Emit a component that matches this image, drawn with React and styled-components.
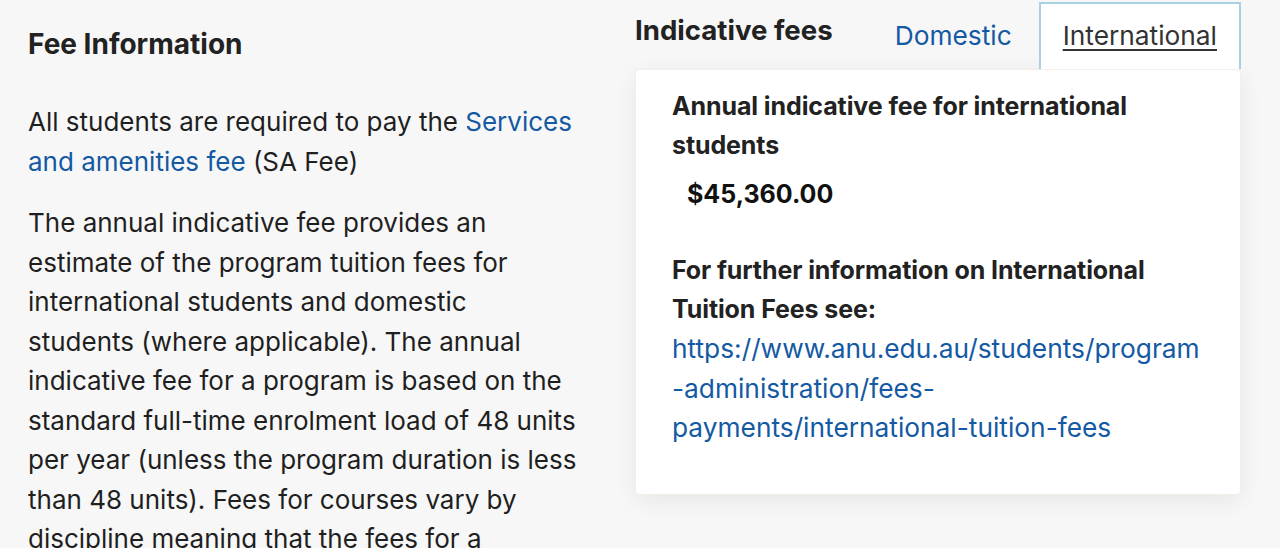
import React, { useState } from 'react';
import styled, { createGlobalStyle } from 'styled-components';

const GlobalStyle = createGlobalStyle`
  html, body {
    margin: 0;
    height: 100%;
    overflow: hidden;
    background: #f7f7f7;
  }
  body {
    font-family: Inter, "Noto Sans", sans-serif;
    color: #1f1f1f;
  }
`;

const blue = '#1459a3';

const Page = styled.div`
  display: flex;
  align-items: flex-start;
  gap: 45px;
  padding-left: 28px;
`;

const InfoColumn = styled.section`
  width: 562px;
  flex-shrink: 0;
`;

const Heading = styled.h2`
  margin: 27px 0 0;
  font-size: 28px;
  line-height: 34px;
  font-weight: 700;
  color: #222;
`;

const Paragraph = styled.p`
  margin: ${(p) => (p.$first ? '41px' : '22px')} 0 0;
  font-size: 26px;
  line-height: 39.5px;
  font-weight: 400;
  white-space: nowrap;
`;

const Link = styled.a`
  color: ${blue};
  text-decoration: none;
`;

const FeesColumn = styled.section`
  width: 606px;
  flex-shrink: 0;
  margin-top: 2px;
`;

const TabBar = styled.div`
  display: flex;
  align-items: flex-start;
  position: relative;
  z-index: 2;
`;

const FeesTitle = styled.h3`
  flex: 1;
  margin: 11px 0 0;
  font-size: 27.6px;
  line-height: 34px;
  font-weight: 700;
  color: #222;
`;

const Tabs = styled.div`
  display: flex;
  gap: 2px;
`;

const Tab = styled.button`
  height: 67px;
  box-sizing: border-box;
  padding: 0 ${(p) => (p.$active ? '22px' : '23px')} 2px;
  display: flex;
  align-items: center;
  font-family: inherit;
  font-size: 26.3px;
  border: 2px solid ${(p) => (p.$active ? '#a9d0e2' : 'transparent')};
  border-bottom: none;
  border-radius: 0;
  background: ${(p) => (p.$active ? '#fff' : 'transparent')};
  color: ${(p) => (p.$active ? '#333' : blue)};
  text-decoration: ${(p) => (p.$active ? 'underline' : 'none')};
  text-decoration-thickness: 1.5px;
  text-underline-offset: 4px;
  cursor: pointer;
`;

const Card = styled.div`
  position: relative;
  z-index: 1;
  background: #fff;
  border: 1px solid #f4efe6;
  border-radius: 4px;
  box-shadow: 0 6px 24px rgba(0, 0, 0, 0.07);
  padding: 17px 36px 46px;
`;

const CardLabel = styled.div`
  margin-top: ${(p) => p.$gap || 0}px;
  font-size: 25px;
  line-height: 39px;
  font-weight: 700;
  letter-spacing: -0.1px;
  color: #222;
`;

const Amount = styled.div`
  margin-top: 12px;
  padding-left: 15px;
  font-size: 25px;
  line-height: 34px;
  font-weight: 700;
  color: #111;
`;

const UrlLink = styled.a`
  display: block;
  color: ${blue};
  font-size: 26.3px;
  line-height: 39.5px;
  text-decoration: none;
`;

const Lines = ({ lines }) =>
  lines.map((line, i) => (
    <React.Fragment key={i}>
      {line}
      {i < lines.length - 1 && <br />}
    </React.Fragment>
  ));

const fees = {
  Domestic: {
    label: ['Annual indicative fee for domestic', 'students'],
    amount: 'N/A',
    more: ['For further information on Domestic', 'Tuition Fees see:'],
    url: ['https://www.anu.edu.au/students/program', '-administration/fees-', 'payments/domestic-tuition-fees'],
  },
  International: {
    label: ['Annual indicative fee for international', 'students'],
    amount: '$45,360.00',
    more: ['For further information on International', 'Tuition Fees see:'],
    url: ['https://www.anu.edu.au/students/program', '-administration/fees-', 'payments/international-tuition-fees'],
  },
};

const aboutFees = [
  'The annual indicative fee provides an',
  'estimate of the program tuition fees for',
  'international students and domestic',
  'students (where applicable). The annual',
  'indicative fee for a program is based on the',
  'standard full-time enrolment load of 48 units',
  'per year (unless the program duration is less',
  'than 48 units). Fees for courses vary by',
  'discipline meaning that the fees for a',
];

export default function App() {
  const [tab, setTab] = useState('International');
  const fee = fees[tab];

  return (
    <>
      <GlobalStyle />
      <Page>
        <InfoColumn>
          <Heading>Fee Information</Heading>
          <Paragraph $first>
            All students are required to pay the <Link href="#">Services</Link>
            <br />
            <Link href="#">and amenities fee</Link> (SA Fee)
          </Paragraph>
          <Paragraph>
            <Lines lines={aboutFees} />
          </Paragraph>
        </InfoColumn>

        <FeesColumn>
          <TabBar>
            <FeesTitle>Indicative fees</FeesTitle>
            <Tabs>
              {Object.keys(fees).map((name) => (
                <Tab key={name} $active={tab === name} onClick={() => setTab(name)}>
                  {name}
                </Tab>
              ))}
            </Tabs>
          </TabBar>
          <Card>
            <CardLabel>
              <Lines lines={fee.label} />
            </CardLabel>
            <Amount>{fee.amount}</Amount>
            <CardLabel $gap={40}>
              <Lines lines={fee.more} />
            </CardLabel>
            <UrlLink href="#">
              <Lines lines={fee.url} />
            </UrlLink>
          </Card>
        </FeesColumn>
      </Page>
    </>
  );
}
